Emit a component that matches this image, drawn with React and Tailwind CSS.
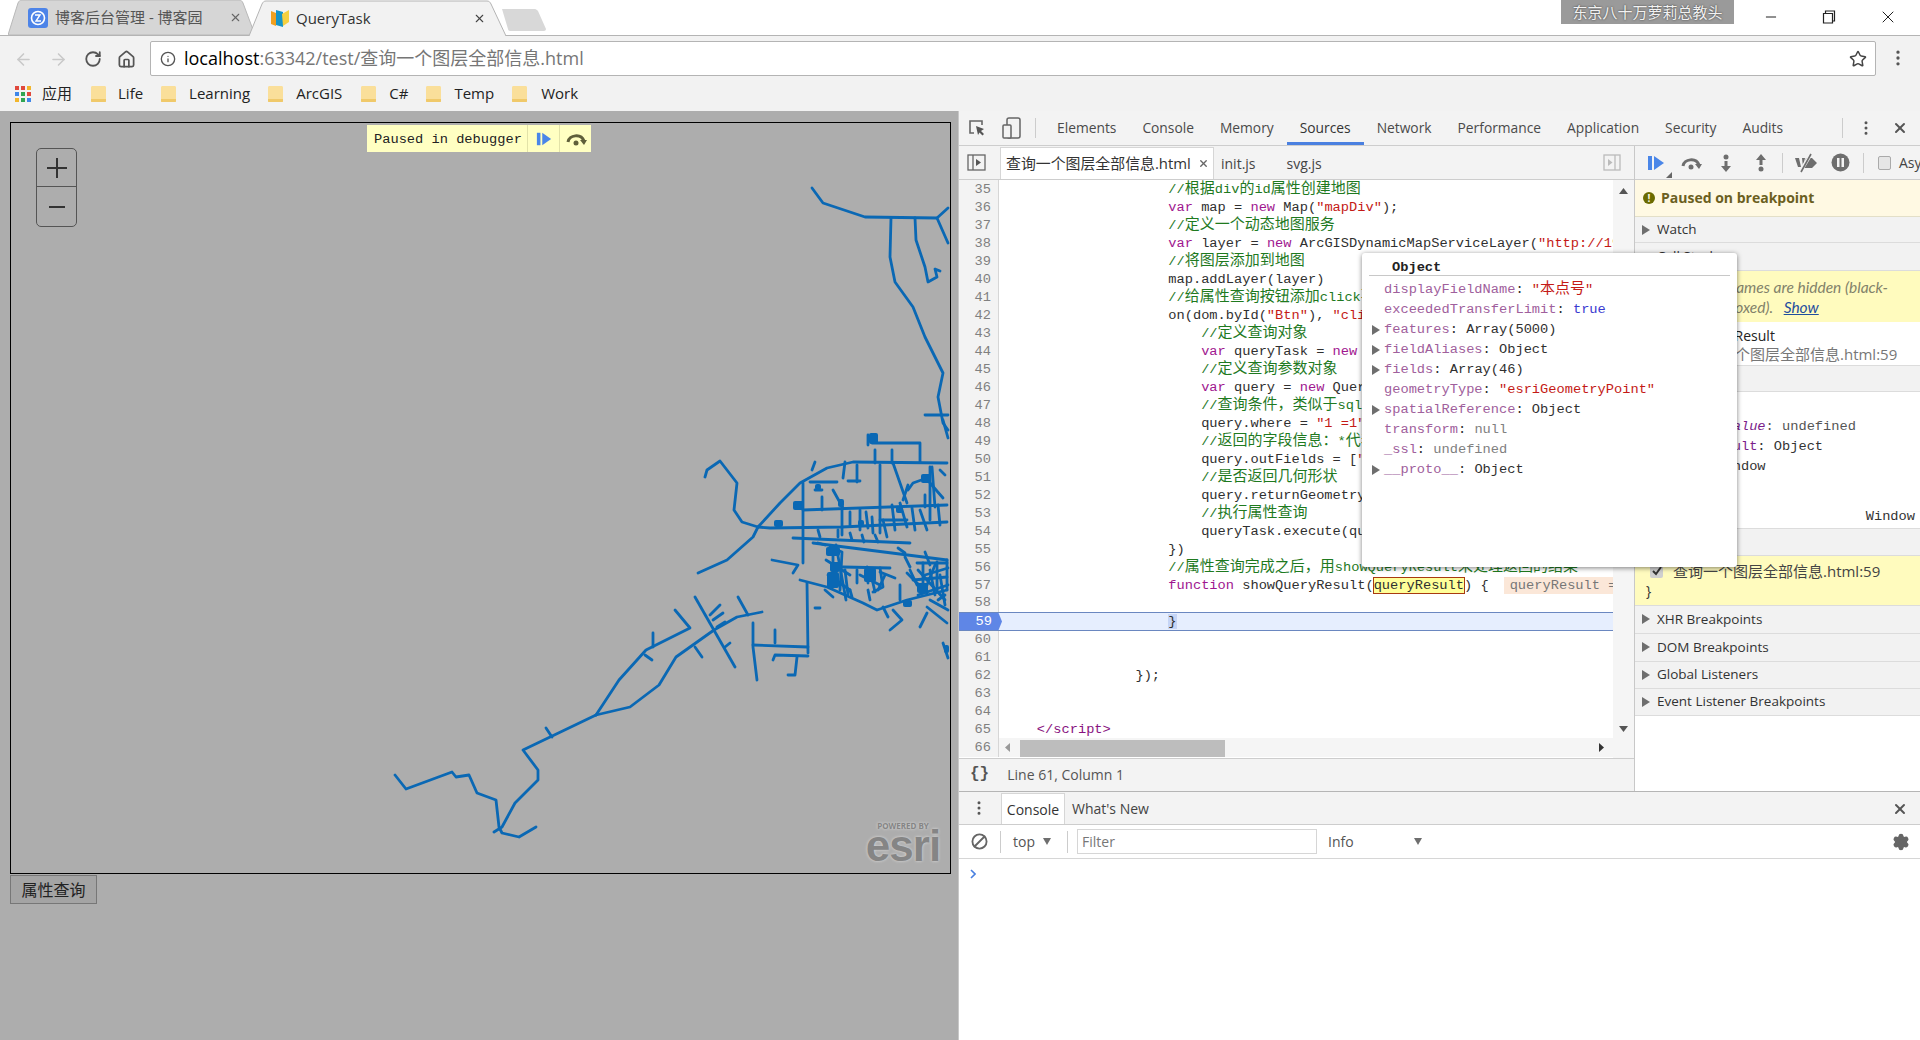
import React from 'react';
import { ArrowLeft, ArrowRight, RotateCw, Home, Info, Star, EllipsisVertical, X, Minus, Settings, Ban } from 'lucide-react';

const mono = "font-['Liberation_Mono','Noto_Sans_CJK_SC',monospace]";

const tokenColors = {
  p: 'text-[#303030]',
  k: 'text-[#a0168f]',
  s: 'text-[#c41a16]',
  c: 'text-[#1f7a1f]',
  t: 'text-[#881280]',
};

// full width text runs are a bit larger than the latin ones, like the original fallback font
function Cjk({ text }) {
  const parts = text.split(/([\u4e00-\u9fff，：]+)/);
  return parts.map((part, i) =>
    i % 2 === 1 ? (
      <span key={i} className="text-[15px]">{part}</span>
    ) : (
      <span key={i}>{part}</span>
    )
  );
}

const lines = [
  [35, 20, [['c', '//根据div的id属性创建地图']]],
  [36, 20, [['k', 'var'], ['p', ' map = '], ['k', 'new'], ['p', ' Map('], ['s', '"mapDiv"'], ['p', ');']]],
  [37, 20, [['c', '//定义一个动态地图服务']]],
  [38, 20, [['k', 'var'], ['p', ' layer = '], ['k', 'new'], ['p', ' ArcGISDynamicMapServiceLayer('], ['s', '"http://192.168.1.1/arcgis"']]],
  [39, 20, [['c', '//将图层添加到地图']]],
  [40, 20, [['p', 'map.addLayer(layer)']]],
  [41, 20, [['c', '//给属性查询按钮添加click事件']]],
  [42, 20, [['p', 'on(dom.byId('], ['s', '"Btn"'], ['p', '), '], ['s', '"click"'], ['p', ', function () {']]],
  [43, 24, [['c', '//定义查询对象']]],
  [44, 24, [['k', 'var'], ['p', ' queryTask = '], ['k', 'new'], ['p', ' QueryTask(url);']]],
  [45, 24, [['c', '//定义查询参数对象']]],
  [46, 24, [['k', 'var'], ['p', ' query = '], ['k', 'new'], ['p', ' Query();']]],
  [47, 24, [['c', '//查询条件，类似于sql语句的where']]],
  [48, 24, [['p', 'query.where = '], ['s', '"1 =1"'], ['p', ';']]],
  [49, 24, [['c', '//返回的字段信息：*代表全部']]],
  [50, 24, [['p', 'query.outFields = ['], ['s', '"*"'], ['p', '];']]],
  [51, 24, [['c', '//是否返回几何形状']]],
  [52, 24, [['p', 'query.returnGeometry = true;']]],
  [53, 24, [['c', '//执行属性查询']]],
  [54, 24, [['p', 'queryTask.execute(query, showQueryResult);']]],
  [55, 20, [['p', '})']]],
  [56, 20, [['c', '//属性查询完成之后，用showQueryResult来处理返回的结果']]],
];

const roads = [
  '812,188 823,203 865,217 937,218 948,208',
  '937,218 948,243',
  '891,218 890,257 895,282 913,307 925,337 943,373 938,397 943,423 948,430',
  '915,218 916,240 925,267 928,282 937,277 935,269 940,271',
  '925,415 948,415',
  '705,477 707,470 720,461 737,483 734,510 742,522 758,527 770,528 842,527 947,522',
  '758,527 780,503 800,483 827,468 853,462 947,463',
  '698,573 727,560 753,537 758,527',
  '803,483 803,563',
  '803,510 947,505',
  '793,538 910,543',
  '813,543 947,560',
  '772,560 798,565 793,573',
  '800,580 827,587 863,603 877,610 907,600 947,590',
  '807,583 808,653',
  '753,623 753,647 757,680',
  '753,645 808,647',
  '775,630 775,643',
  '773,660 775,655 808,656',
  '797,657 795,675 788,675',
  '695,597 735,667',
  '395,775 406,789 452,772 456,777 469,775 477,793 496,800 499,827 502,833 519,837 536,827',
  '494,832 502,827 515,803 538,780 538,770 523,750 596,715',
  '596,715 619,680 646,650 690,628 675,610',
  '596,715 630,707 659,685 676,657 714,630 737,617 762,612',
  '546,728 552,737',
  '653,633 653,647',
  '645,655 652,660',
  '695,647 702,657',
  '738,597 748,615',
  '710,615 720,605',
  '713,620 723,613',
  '717,627 725,622',
  '725,647 730,643',
  '872,443 920,443 920,462',
  '857,465 857,482',
  '880,465 880,533',
  '893,463 907,503',
  '842,507 842,535',
  '833,490 843,508',
  '930,467 930,520',
  '810,482 837,482',
  '848,481 860,481',
  '943,420 948,438',
  '860,510 860,530',
  '872,517 873,533',
  '883,520 887,537',
  '900,503 907,527',
  '920,510 927,530',
  '880,520 907,520',
  '932,467 935,507',
  '908,490 913,483 927,478',
  '930,483 943,498',
  '903,500 908,485',
  '830,547 842,552 840,590',
  '833,553 833,587',
  '843,567 890,568',
  '857,570 857,583',
  '867,567 868,583',
  '880,568 883,587 873,592',
  '907,573 927,593',
  '917,563 947,563',
  '923,563 923,593',
  '937,562 937,590',
  '913,580 947,577',
  '947,560 947,590',
  '900,585 900,600',
  '883,607 888,617',
  '893,610 902,620 890,630',
  '920,627 927,613',
  '927,607 947,623',
  '943,643 948,658',
  '905,557 910,567',
  '818,543 825,545',
  '815,608 820,608',
  '815,490 822,490',
  '822,497 822,510',
  '850,512 850,525',
  '866,512 868,528',
  '892,505 895,530',
  '912,508 915,530',
  '938,505 940,525',
  '925,495 925,507',
  '940,470 945,475',
  '868,435 868,445',
  '892,450 892,463',
  '875,450 875,463',
  '843,478 845,462',
  '812,470 815,462',
  '818,530 820,537',
  '838,530 838,537',
  '850,533 852,540',
  '862,535 864,542',
  '875,535 878,542',
  '898,548 905,553',
  '925,552 930,565',
  '910,570 917,585',
  '930,570 935,595',
  '945,595 938,600',
  '880,572 895,578',
  '850,590 852,597',
  '868,590 870,600',
  '825,590 833,597',
  '826,560 850,575',
  '828,575 850,590',
  '836,545 846,600',
  '845,570 848,595',
  '918,570 945,600',
  '925,575 948,568',
  '918,595 948,585',
  '930,600 948,610',
  '935,565 925,590',
  '940,575 945,605',
  '860,575 880,585',
  '885,575 878,590',
  '870,570 875,592',
];

const blobs = [
  [869, 433, 9, 11], [793, 501, 11, 9], [774, 520, 9, 7], [826, 547, 14, 9], [827, 572, 12, 16], [864, 568, 12, 14],
  [921, 474, 10, 9], [917, 583, 11, 10], [903, 600, 9, 7], [838, 499, 6, 8], [815, 484, 6, 6],
  [830, 562, 10, 10], [858, 520, 6, 6], [896, 506, 7, 7], [944, 645, 5, 8],
];

function RoadMap() {
  return (
    <svg viewBox="11 123 939 750" className="block h-full w-full">
      <g fill="none" stroke="#0a68b4" strokeWidth="2.8" strokeLinejoin="round" strokeLinecap="round">
        {roads.map((points, i) => (
          <polyline key={i} points={points} />
        ))}
      </g>
      {blobs.map(([x, y, w, h], i) => (
        <rect key={i} x={x} y={y} width={w} height={h} rx="2" fill="#0a68b4" />
      ))}
    </svg>
  );
}

function Folder() {
  return (
    <svg width="17" height="18" viewBox="0 0 17 18" className="shrink-0">
      <path d="M1 2.5C1 1.5 1.6 1 2.5 1H14.5C15.4 1 16 1.5 16 2.5V16C16 16.7 15.5 17 15 17H2C1.5 17 1 16.7 1 16Z" fill="#fadf9a" />
      <path d="M1 14H16V16C16 16.7 15.5 17 15 17H2C1.5 17 1 16.7 1 16Z" fill="#f0c96a" />
    </svg>
  );
}

function Triangle({ down = false, className = '' }) {
  return (
    <svg width="8" height="10" viewBox="0 0 8 10" className={`shrink-0 ${className}`}>
      <path d={down ? 'M0 1H8L4 8Z' : 'M0 0L8 5L0 10Z'} fill="#6e6e6e" />
    </svg>
  );
}

function Resume({ size = 18 }) {
  return (
    <svg width={size} height={size} viewBox="0 0 18 18" className="shrink-0">
      <rect x="1" y="2" width="4" height="14" fill="#4a86e8" />
      <path d="M7 2L17 9L7 16Z" fill="#4a86e8" />
    </svg>
  );
}

function StepOver({ color = '#6e6e6e' }) {
  return (
    <svg width="22" height="14" viewBox="0 0 22 14" className="shrink-0">
      <path d="M3 10C4 3 16 1 19 9" fill="none" stroke={color} strokeWidth="3" />
      <path d="M15 8H22L19 13Z" fill={color} />
      <circle cx="11" cy="11" r="2.5" fill={color} />
    </svg>
  );
}

function StepVertical({ up = false }) {
  return (
    <svg width="12" height="18" viewBox="0 0 12 18" className="shrink-0">
      <g transform={up ? '' : 'translate(0 18) scale(1 -1)'}>
        <path d="M6 0L11 6H7.5V11H4.5V6H1Z" fill="#6e6e6e" />
        <circle cx="6" cy="15" r="2.5" fill="#6e6e6e" />
      </g>
    </svg>
  );
}

function SectionHeader({ title, open = false, className = 'h-[27px]' }) {
  return (
    <div className={`flex items-center border-b border-[#dcdcdc] bg-[#f2f2f2] pl-[7px] ${className}`}>
      <Triangle down={open} />
      <span className="ml-[7px] text-[13.5px] text-[#333]">{title}</span>
    </div>
  );
}

function PopRow({ name, arrow = false, children }) {
  return (
    <div className="flex h-[20px] items-center whitespace-pre leading-[20px]">
      <span className="w-[22px] pl-[10px]">{arrow && <Triangle />}</span>
      <span className="text-[#a0609c]">{name}</span>
      <span className="text-[#303030]">: </span>
      {children}
    </div>
  );
}

function Gutter({ num }) {
  return <div className="w-[40px] shrink-0 border-r border-[#d6d6d6] bg-[#f3f3f3] pr-[7px] text-right text-[#808080]">{num}</div>;
}

export default function App() {
  return (
    <div className={"relative flex h-[1040px] w-[1920px] flex-col overflow-hidden bg-white font-['Open_Sans','Noto_Sans_CJK_SC',sans-serif] text-[#333]"}>
      {/* Window title strip */}
      <div className="flex h-[36px] shrink-0 border-b border-[#b4b4b4] bg-white pl-[8px]">
        <div className="relative flex h-[35px] w-[247px] items-center">
          <svg viewBox="0 0 247 35" preserveAspectRatio="none" className="absolute inset-0 h-full w-full">
            <path d="M0 35L10 3C11 1 12 0 14 0H231C233 0 234 1 235 3L247 35Z" fill="#d6d6d6" stroke="#b8b8b8" />
          </svg>
          <svg width="20" height="20" viewBox="0 0 20 20" className="relative ml-[20px]">
            <rect width="20" height="20" rx="3" fill="#4d84e8" />
            <circle cx="10" cy="10" r="6.5" fill="none" stroke="#fff" strokeWidth="1.6" />
            <path d="M7 7H12L8 13H13" fill="none" stroke="#fff" strokeWidth="1.4" />
          </svg>
          <span className="relative ml-[7px] whitespace-nowrap text-[15px] text-[#555]">博客后台管理 - 博客园</span>
          <X size={13} className="absolute left-[221px] text-[#666]" />
        </div>
        <div className="relative z-10 -ml-[6px] flex h-[36px] w-[257px] items-center pt-px">
          <svg viewBox="0 0 257 36" preserveAspectRatio="none" className="absolute inset-0 h-full w-full">
            <path d="M0 36L13 4C14 2 15 1 17 1H238C240 1 241 2 242 4L257 36" fill="#f2f2f2" stroke="#b4b4b4" />
          </svg>
          <svg width="19" height="19" viewBox="0 0 19 19" className="relative ml-[21px]">
            <path d="M1 2L6 4V17L1 15Z" fill="#f0a020" />
            <path d="M6 1L13 3V18L6 16Z" fill="#1694c8" />
            <path d="M12 5L19 1V13L13 17Z" fill="#f5d040" />
          </svg>
          <span className="relative ml-[7px] text-[15px] text-[#333]">QueryTask</span>
          <X size={13} className="absolute left-[224px] text-[#444]" />
        </div>
        <svg width="44" height="22" viewBox="0 0 44 22" className="ml-[-4px] mt-[9px]">
          <path d="M0 0H33C34 0 35 1 36 2L44 20C44 21 43 22 42 22H8C7 22 6 21 6 20Z" fill="#d8d8d8" />
        </svg>
        <div className="ml-auto flex h-[24px] w-[173px] items-center justify-center bg-[#9a9a9a] text-[15px] text-[#f2f2f2] [text-shadow:0_0_2px_#333]">
          东京八十万萝莉总教头
        </div>
        <div className="flex w-[186px] items-start">
          <Minus size={16} strokeWidth={1.4} className="ml-[29px] mt-[9px] text-[#111]" />
          <svg width="14" height="14" viewBox="0 0 14 14" className="ml-[43px] mt-[10px]">
            <path d="M1.5 3.5H10.5V13H1.5ZM3.5 3.5V1H12.5V11H10.5" fill="none" stroke="#222" strokeWidth="1.2" />
          </svg>
          <X size={20} strokeWidth={1.2} className="ml-[42px] mt-[7px] text-[#222]" />
        </div>
      </div>

      {/* Address bar */}
      <div className="flex h-[40px] shrink-0 items-start bg-[#f2f2f2]">
        <ArrowLeft size={19} className="ml-[14px] mt-[14px] text-[#c9c9c9]" />
        <ArrowRight size={19} className="ml-[16px] mt-[14px] text-[#c9c9c9]" />
        <RotateCw size={18} strokeWidth={2.4} className="ml-[16px] mt-[14px] text-[#555]" />
        <Home size={19} strokeWidth={2.2} className="ml-[15px] mt-[14px] text-[#555]" />
        <div className="ml-[14px] mt-[5px] flex h-[35px] w-[1726px] items-center rounded-[2px] border border-[#b4b4b4] bg-white">
          <Info size={16} className="ml-[9px] text-[#555]" />
          <span className="ml-[8px] text-[18px] text-black">localhost</span>
          <span className="text-[18px] text-[#767676]">:63342/test/查询一个图层全部信息.html</span>
          <Star size={18} className="ml-auto mr-[8px] text-[#444]" />
        </div>
        <EllipsisVertical size={20} className="ml-[12px] mt-[12px] text-[#555]" />
      </div>

      {/* Bookmarks */}
      <div className="flex h-[35px] shrink-0 items-center bg-[#f2f2f2] text-[15px] text-[#222]">
        <div className="ml-[15px] grid h-[16px] w-[16px] grid-cols-3 gap-[2px]">
          <i className="bg-[#e0483c]" />
          <i className="bg-[#e0483c]" />
          <i className="bg-[#f2b62c]" />
          <i className="bg-[#3f86e8]" />
          <i className="bg-[#30a552]" />
          <i className="bg-[#e0483c]" />
          <i className="bg-[#f2b62c]" />
          <i className="bg-[#30a552]" />
          <i className="bg-[#3f86e8]" />
        </div>
        <span className="ml-[11px]">应用</span>
        <div className="ml-[18px]"><Folder /></div>
        <span className="ml-[11px]">Life</span>
        <div className="ml-[17px]"><Folder /></div>
        <span className="ml-[12px]">Learning</span>
        <div className="ml-[17px]"><Folder /></div>
        <span className="ml-[12px]">ArcGIS</span>
        <div className="ml-[18px]"><Folder /></div>
        <span className="ml-[12px]">C#</span>
        <div className="ml-[17px]"><Folder /></div>
        <span className="ml-[12px]">Temp</span>
        <div className="ml-[17px]"><Folder /></div>
        <span className="ml-[13px]">Work</span>
      </div>

      <div className="flex min-h-0 flex-1">
        {/* Paused page */}
        <div className="relative w-[958px] shrink-0 bg-[#adadad] pl-[10px] pt-[11px]">
          <div className="relative h-[752px] w-[941px] border border-black">
            <RoadMap />
            <div className="absolute left-[25px] top-[25px] w-[41px] rounded-[5px] border border-[#555] text-[#333]">
              <div className="flex h-[38px] items-center justify-center border-b border-[#555]">
                <svg width="22" height="22" viewBox="0 0 22 22"><path d="M11 1V21M1 11H21" stroke="#333" strokeWidth="2" /></svg>
              </div>
              <div className="flex h-[39px] items-center justify-center">
                <svg width="16" height="4" viewBox="0 0 16 4"><path d="M0 2H16" stroke="#333" strokeWidth="2" /></svg>
              </div>
            </div>
            <div className="absolute bottom-[11px] right-[9px] flex w-[76px] flex-col items-center text-[#858585] [text-shadow:0_0_3px_#e0e0e0]">
              <span className="text-[8px] font-bold leading-[9px]">POWERED BY</span>
              <span className="font-['Liberation_Sans',sans-serif] text-[44px] font-bold leading-[32px] tracking-[-1px]">esri</span>
            </div>
          </div>
          <button className="mt-px flex h-[29px] w-[87px] items-center justify-center border border-[#777] bg-[#a4a4a4] text-[16px] text-[#222]">
            属性查询
          </button>
          <div className={`absolute left-[367px] top-[14px] flex h-[27px] w-[224px] items-center bg-[#ffffc2] text-[13.7px] leading-[20px] text-[#222] ${mono}`}>
            <span className="w-[160px] pl-[7px] pt-[2px]">Paused in debugger</span>
            <div className="flex h-full w-[32px] items-center justify-center border-l border-[#e2e2a8]"><Resume size={16} /></div>
            <div className="flex h-full w-[32px] items-center justify-center border-l border-[#e2e2a8]"><StepOver color="#5f5f3a" /></div>
          </div>
        </div>

        {/* DevTools */}
        <div className="flex min-w-0 flex-1 flex-col border-l border-[#c8c8c8] bg-white">
          <div className="flex h-[35px] shrink-0 items-center border-b border-[#cdcdcd] bg-[#f3f3f3] text-[13.8px] text-[#4a4a4a]">
            <svg width="18" height="18" viewBox="0 0 18 18" className="ml-[9px]">
              <path d="M14 6V2H2V14H6" fill="none" stroke="#666" strokeWidth="1.6" />
              <path d="M8 7L16 10L13 12L16 15L14.5 16.5L11.5 13.5L10 16Z" fill="#555" />
            </svg>
            <svg width="19" height="22" viewBox="0 0 19 22" className="ml-[16px]">
              <rect x="5" y="1" width="13" height="20" rx="2" fill="none" stroke="#666" strokeWidth="1.5" />
              <rect x="1" y="8" width="8" height="13" rx="1" fill="#f3f3f3" stroke="#666" strokeWidth="1.5" />
            </svg>
            <div className="ml-[14px] h-[20px] w-px bg-[#ccc]" />
            <div className="ml-[8px] flex h-full items-center">
              <span className="flex h-full items-center px-[13px]">Elements</span>
              <span className="flex h-full items-center px-[13px]">Console</span>
              <span className="flex h-full items-center px-[13px]">Memory</span>
              <span className="flex h-full items-center border-b-[3px] border-[#4a80e0] px-[13px] pt-[3px] text-[#333]">Sources</span>
              <span className="flex h-full items-center px-[13px]">Network</span>
              <span className="flex h-full items-center px-[13px]">Performance</span>
              <span className="flex h-full items-center px-[13px]">Application</span>
              <span className="flex h-full items-center px-[13px]">Security</span>
              <span className="flex h-full items-center px-[13px]">Audits</span>
            </div>
            <div className="ml-auto h-[20px] w-px bg-[#ccc]" />
            <EllipsisVertical size={18} className="ml-[14px] text-[#555]" />
            <X size={16} strokeWidth={3} className="ml-[17px] mr-[12px] text-[#555]" />
          </div>

          <div className="flex min-h-0 flex-1">
            {/* Sources column */}
            <div className="flex w-[675px] shrink-0 flex-col">
              <div className="flex h-[34px] shrink-0 items-end border-b border-[#cdcdcd] bg-[#f3f3f3] text-[#444]">
                <svg width="20" height="18" viewBox="0 0 20 18" className="mb-[7px] ml-[8px]">
                  <rect x="1" y="1" width="17" height="15" fill="none" stroke="#666" strokeWidth="1.3" />
                  <path d="M6 1V16" stroke="#666" strokeWidth="1.3" />
                  <path d="M9 5L14 8.5L9 12Z" fill="#555" />
                </svg>
                <div className="ml-[13px] flex h-[32px] w-[214px] items-center border-x border-t border-[#d6d6d6] bg-white pl-[5px] text-[14.9px] text-[#333]">
                  <span className="whitespace-nowrap">查询一个图层全部信息.html</span>
                  <X size={11} strokeWidth={3} className="ml-[7px] text-[#666]" />
                </div>
                <span className="mb-[5px] ml-[7px] text-[14px]">init.js</span>
                <span className="mb-[5px] ml-[31px] text-[14px]">svg.js</span>
                <svg width="18" height="18" viewBox="0 0 18 18" className="mb-[7px] ml-auto mr-[13px]">
                  <rect x="1" y="1" width="16" height="15" fill="none" stroke="#bbb" strokeWidth="1.3" />
                  <path d="M12 1V16" stroke="#bbb" strokeWidth="1.3" />
                  <path d="M5 5L9.5 8.5L5 12Z" fill="#bbb" />
                </svg>
              </div>

              <div className={`relative flex h-[578px] shrink-0 text-[13.7px] leading-[18px] ${mono}`}>
                <div className="min-w-0 flex-1 overflow-hidden">
                  {lines.map(([num, indent, tokens]) => (
                    <div key={num} className="flex h-[18px] leading-[20px]">
                      <Gutter num={num} />
                      <div className="whitespace-pre pl-[5px]">
                        {' '.repeat(indent)}
                        {tokens.map(([type, text], i) => (
                          <span key={i} className={tokenColors[type]}><Cjk text={text} /></span>
                        ))}
                      </div>
                    </div>
                  ))}
                  <div className="flex h-[18px] leading-[20px]">
                    <Gutter num={57} />
                    <div className="whitespace-pre pl-[5px] text-[#303030]">
                      {' '.repeat(20)}
                      <span className="text-[#a0168f]">function</span> showQueryResult(
                      <span className="-mx-px border border-[#a83a10] bg-[#ffff99]">queryResult</span>) {'{'}
                      <span className="ml-[15px] bg-[#fbe7d8] py-px pl-[6px] pr-[40px] text-[#777]">queryResult = Object</span>
                    </div>
                  </div>
                  <div className="flex h-[18px]">
                    <Gutter num={58} />
                  </div>
                  <div className="flex h-[19px] border-y border-[#6a87c0] bg-[#e6eefe] leading-[17px]">
                    <div className="w-[43px] shrink-0 bg-[#5f86e6] pr-[10px] text-right text-white [clip-path:polygon(0_0,92%_0,100%_50%,92%_100%,0_100%)]">59</div>
                    <div className="-ml-[3px] whitespace-pre pl-[5px] text-[#303030]">
                      {' '.repeat(20)}
                      <span className="bg-[#c6d5f6]">{'}'}</span>
                    </div>
                  </div>
                  {[60, 61, 62, 63, 64, 65, 66].map((num) => (
                    <div key={num} className="flex h-[18px]">
                      <Gutter num={num} />
                      {num === 62 && <div className="whitespace-pre pl-[5px] text-[#303030]">{' '.repeat(16)}{'});'}</div>}
                      {num === 65 && <div className="whitespace-pre pl-[5px] text-[#881280]">{'    </script>'}</div>}
                    </div>
                  ))}
                </div>

                {/* vertical scrollbar */}
                <div className="flex w-[21px] shrink-0 flex-col items-center justify-between bg-[#f5f5f5] pb-[22px] pt-[8px]">
                  <svg width="9" height="6" viewBox="0 0 9 6"><path d="M0 6L4.5 0L9 6Z" fill="#555" /></svg>
                  <svg width="9" height="6" viewBox="0 0 9 6" className="mb-[4px]"><path d="M0 0L4.5 6L9 0Z" fill="#555" /></svg>
                </div>

                {/* horizontal scrollbar sits on top of the last code line */}
                <div className="absolute bottom-[1px] left-[40px] flex h-[19px] w-[614px] items-center bg-[#f5f5f5] pl-[6px]">
                  <svg width="5" height="9" viewBox="0 0 5 9"><path d="M5 0L0 4.5L5 9Z" fill="#999" /></svg>
                  <div className="ml-[10px] h-[17px] w-[205px] self-end bg-[#bdbdbd]" />
                  <svg width="5" height="9" viewBox="0 0 5 9" className="ml-auto mr-[9px]"><path d="M0 0L5 4.5L0 9Z" fill="#333" /></svg>
                </div>
              </div>

              <div className="flex flex-1 items-center border-t border-[#cdcdcd] bg-[#f3f3f3] pb-[2px] text-[14px] text-[#555]">
                <span className={`ml-[11px] text-[16px] font-bold ${mono}`}>{'{}'}</span>
                <span className="ml-[18px]">Line 61, Column 1</span>
              </div>
            </div>

            {/* Debugger sidebar */}
            <div className="flex min-w-0 flex-1 flex-col overflow-hidden border-l border-[#c8c8c8]">
              <div className="flex h-[34px] shrink-0 items-center border-b border-[#cdcdcd] bg-[#f3f3f3]">
                <div className="relative ml-[12px]">
                  <Resume size={18} />
                  <svg width="6" height="6" viewBox="0 0 6 6" className="absolute -bottom-[6px] -right-[7px]"><path d="M6 0V6H0Z" fill="#666" /></svg>
                </div>
                <div className="ml-[15px]"><StepOver /></div>
                <div className="ml-[18px]"><StepVertical /></div>
                <div className="ml-[23px]"><StepVertical up /></div>
                <div className="ml-[15px] h-[20px] w-px shrink-0 bg-[#ccc]" />
                <svg width="24" height="20" viewBox="0 0 24 20" className="ml-[11px] shrink-0">
                  <path d="M1 5H5L7 14H4ZM8 5H11L9 14ZM12 5H18L23 10L18 15H9Z" fill="#6e6e6e" />
                  <path d="M6 19L17 1" stroke="#f3f3f3" strokeWidth="3.5" />
                  <path d="M7 19L17 1" stroke="#6e6e6e" strokeWidth="1.6" />
                </svg>
                <svg width="19" height="19" viewBox="0 0 19 19" className="ml-[13px] shrink-0">
                  <circle cx="9.5" cy="9.5" r="9" fill="#6e6e6e" />
                  <rect x="6" y="5" width="2.5" height="9" fill="#f3f3f3" />
                  <rect x="10.5" y="5" width="2.5" height="9" fill="#f3f3f3" />
                </svg>
                <div className="ml-[13px] h-[20px] w-px shrink-0 bg-[#ccc]" />
                <div className="ml-[14px] h-[14px] w-[13px] shrink-0 rounded-[2px] border border-[#aaa] bg-[#e6e6e6]" />
                <span className="ml-[8px] whitespace-nowrap text-[14px] text-[#444]">Async</span>
              </div>

              <div className="flex h-[37px] shrink-0 items-center border-b border-[#e3dfc8] bg-[#fff9e3] pb-px pl-[8px]">
                <div className="flex h-[12px] w-[12px] items-center justify-center rounded-full bg-[#6b6b00] text-[10px] font-bold leading-none text-[#fff9e3]">!</div>
                <span className="ml-[6px] text-[14px] font-bold text-[#6b5f1f]">Paused on breakpoint</span>
              </div>
              <SectionHeader title="Watch" className="h-[26px] shrink-0" />
              <SectionHeader title="Call Stack" open className="h-[28px] shrink-0" />
              <div className="h-[51px] shrink-0 whitespace-nowrap bg-[#fffbbe] pt-[6px] font-['Lato','Noto_Sans_CJK_SC',sans-serif] text-[15.5px] italic leading-[20px] text-[#82826a]">
                <div className="pr-[32px] text-right">3 stack frames are hidden (black-</div>
                <div className="pl-[92px]">boxed). <span className="ml-[7px] text-[#1f4e9e] underline">Show</span></div>
              </div>
              <div className="h-[44px] shrink-0 border-b border-[#dcdcdc] text-[14px] leading-[18px]">
                <div className="pl-[25px] pt-[5px] text-[#222]">showQueryResult</div>
                <div className="whitespace-nowrap pl-[55px] text-[15px] text-[#777]">查询一个图层全部信息.html:59</div>
              </div>
              <SectionHeader title="Scope" open className="h-[26px] shrink-0" />
              <div className={`h-[136px] shrink-0 pt-[25px] text-[13.7px] leading-[20px] ${mono}`}>
                <div className="whitespace-pre pl-[32px]"><span className="italic text-[#7a1d8a]">Return value</span><span className="text-[#555]">: undefined</span></div>
                <div className="whitespace-pre pl-[32px]"><span className="text-[#7a1d8a]">queryResult</span>: Object</div>
                <div className="whitespace-pre pl-[32px]"><span className="text-[#7a1d8a]">this</span>: Window</div>
                <div className="mt-[30px] flex pl-[20px] pr-[5px]"><span>Global</span><span className="ml-auto">Window</span></div>
              </div>
              <SectionHeader title="Breakpoints" open className="h-[28px] shrink-0 border-t" />
              <div className="h-[50px] shrink-0 border-b border-[#dcdcdc] bg-[#fffbbe] pt-[5px] text-[14px] leading-[20px]">
                <div className="flex items-center pl-[15px]">
                  <div className="flex h-[13px] w-[13px] items-center justify-center rounded-[2px] bg-[#cfcfcf]">
                    <svg width="10" height="10" viewBox="0 0 10 10"><path d="M1 5L4 8L9 1" fill="none" stroke="#333" strokeWidth="2" /></svg>
                  </div>
                  <span className="ml-[10px] whitespace-nowrap text-[15px] text-[#444]">查询一个图层全部信息.html:59</span>
                </div>
                <div className="pl-[11px]">{'}'}</div>
              </div>
              <SectionHeader title="XHR Breakpoints" className="h-[28px] shrink-0 pb-px" />
              <SectionHeader title="DOM Breakpoints" className="h-[28px] shrink-0 pb-px" />
              <SectionHeader title="Global Listeners" className="h-[27px] shrink-0 pb-px" />
              <SectionHeader title="Event Listener Breakpoints" className="h-[27px] shrink-0 pb-px" />
            </div>
          </div>

          {/* Console drawer */}
          <div className="h-[249px] shrink-0 border-t border-[#b5b5b5]">
            <div className="flex h-[33px] items-end border-b border-[#cdcdcd] bg-[#f3f3f3] text-[14px] text-[#444]">
              <EllipsisVertical size={18} className="mb-[7px] ml-[11px] text-[#555]" />
              <div className="ml-[13px] flex h-[31px] w-[64px] items-center justify-center border-x border-t border-[#d6d6d6] bg-white text-[#333]">Console</div>
              <span className="mb-[5px] ml-[7px]">What's New</span>
              <X size={16} strokeWidth={3} className="mb-[7px] ml-auto mr-[12px] text-[#555]" />
            </div>
            <div className="flex h-[34px] items-center border-b border-[#d6d6d6] bg-white text-[14px] text-[#555]">
              <Ban size={17} strokeWidth={2.6} className="ml-[12px] rotate-90 text-[#666]" />
              <div className="ml-[12px] h-[22px] w-px bg-[#ccc]" />
              <span className="ml-[12px]">top</span>
              <Triangle down className="ml-[8px]" />
              <div className="ml-[16px] h-[22px] w-px bg-[#ccc]" />
              <div className="ml-[9px] flex h-[25px] w-[240px] items-center border border-[#d6d6d6] pl-[4px] text-[#777]">Filter</div>
              <span className="ml-[11px]">Info</span>
              <Triangle down className="ml-[60px]" />
              <Settings size={18} fill="#666" className="ml-auto mr-[10px] text-[#666]" />
            </div>
            <div className="pl-[11px] pt-[10px]">
              <svg width="6" height="10" viewBox="0 0 6 10"><path d="M1 1L5 5L1 9" fill="none" stroke="#4a80e0" strokeWidth="1.6" /></svg>
            </div>
          </div>
        </div>
      </div>

      {/* Object preview popover */}
      <div className={`absolute left-[1362px] top-[253px] h-[314px] w-[375px] rounded-[3px] bg-white text-[13.7px] shadow-[0_1px_5px_rgba(0,0,0,0.5)] ${mono}`}>
        <div className="mx-[7px] h-[23px] border-b border-[#c8c8c8] pl-[23px] pt-[6px] font-bold leading-[18px] text-[#222]">Object</div>
        <div className="pt-[4px]">
          <PopRow name="displayFieldName"><span className="text-[#c41a16]">"<span className="text-[15px]">本点号</span>"</span></PopRow>
          <PopRow name="exceededTransferLimit"><span className="text-[#3a3ad0]">true</span></PopRow>
          <PopRow name="features" arrow><span className="text-[#303030]">Array(5000)</span></PopRow>
          <PopRow name="fieldAliases" arrow><span className="text-[#303030]">Object</span></PopRow>
          <PopRow name="fields" arrow><span className="text-[#303030]">Array(46)</span></PopRow>
          <PopRow name="geometryType"><span className="text-[#c41a16]">"esriGeometryPoint"</span></PopRow>
          <PopRow name="spatialReference" arrow><span className="text-[#303030]">Object</span></PopRow>
          <PopRow name="transform"><span className="text-[#808080]">null</span></PopRow>
          <PopRow name="_ssl"><span className="text-[#808080]">undefined</span></PopRow>
          <PopRow name="__proto__" arrow><span className="text-[#303030]">Object</span></PopRow>
        </div>
      </div>
    </div>
  );
}
